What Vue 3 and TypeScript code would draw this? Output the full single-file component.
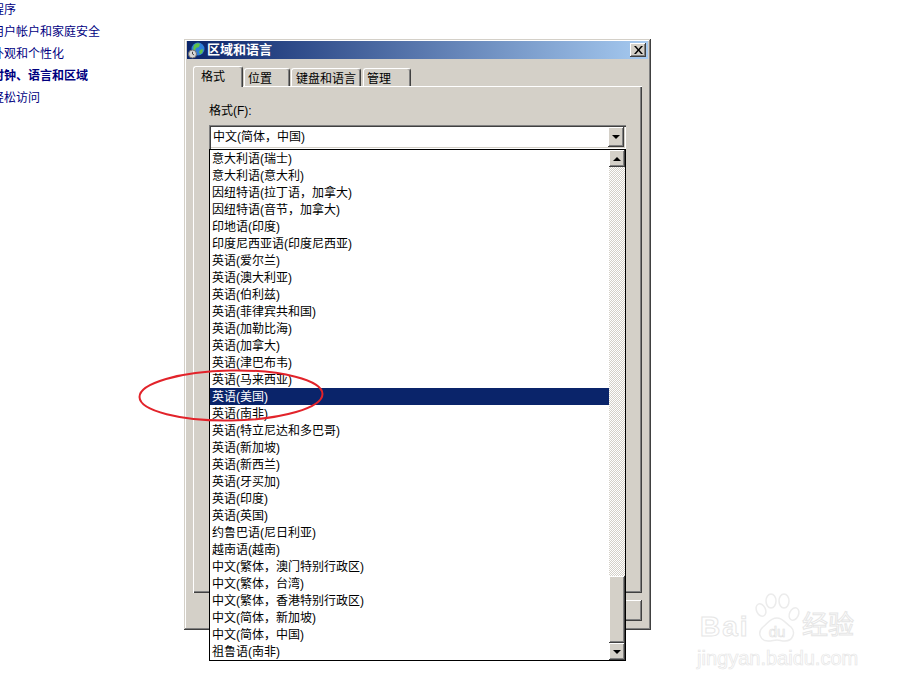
<template>
  <div class="page">
    <ul class="nav">
      <li v-for="item in navItems" :key="item.label" :class="{ current: item.current }">{{ item.label }}</li>
    </ul>

    <section class="window">
      <header class="titlebar">
        <svg class="title-icon" width="17" height="17" viewBox="0 0 17 17">
          <circle cx="10" cy="7" r="6.5" fill="#2f7fd8" />
          <path d="M6 3c2-2 5-2 6-1l-1 3-3 1-1 3-2-2zM12 8l3-1c0 3-1 5-3 5l-1-2z" fill="#5fbf4a" />
          <circle cx="4.5" cy="12" r="4" fill="#d8d8d8" stroke="#6f6f6f" />
          <path d="M4.5 9.8V12l1.6 1" fill="none" stroke="#444" />
        </svg>
        <span class="title-text">区域和语言</span>
        <button class="close">
          <svg width="9" height="8" viewBox="0 0 9 8">
            <path d="M0 0h2l2.500 3L7 0h2L5.500 4 9 8H7L4.500 5 2 8H0l3.500-4z" fill="#000" />
          </svg>
        </button>
      </header>

      <nav class="tabs">
        <div v-for="tab in tabs" :key="tab.label" class="tab" :class="tab.cls">{{ tab.label }}</div>
      </nav>

      <div class="panel">
        <label class="field-label">格式(F):</label>
        <div class="combo">
          <span class="combo-value">中文(简体，中国)</span>
          <span class="arrow-btn combo-btn"><i class="tri down"></i></span>
        </div>
      </div>

      <footer class="footer">
        <button class="action"></button>
      </footer>

      <div class="dropdown">
        <div class="rows">
          <div v-for="(row, i) in rows" :key="row" class="row" :class="{ selected: i === selectedIndex }">{{ row }}</div>
        </div>
        <div class="scrollbar">
          <span class="arrow-btn scroll-btn"><i class="tri up"></i></span>
          <div class="track"></div>
          <div class="thumb"></div>
          <span class="arrow-btn scroll-btn"><i class="tri down"></i></span>
        </div>
      </div>
    </section>

    <svg class="annotation" width="906" height="689" viewBox="0 0 906 689">
      <ellipse cx="231" cy="395.500" rx="91.500" ry="25" fill="none" stroke="#e2232a" stroke-width="2" transform="rotate(-1 231 395.500)" />
    </svg>

    <div class="watermark">
      <div class="wm-top">
        <span class="wm-bai">Bai</span>
        <svg class="wm-paw" width="46" height="50" viewBox="0 0 46 50">
          <g fill="#fff" stroke="#ececec" stroke-width="1.500">
            <ellipse cx="7" cy="17" rx="4.500" ry="6.500" transform="rotate(-25 7 17)" />
            <ellipse cx="17" cy="8" rx="5" ry="7" />
            <ellipse cx="30" cy="8" rx="5" ry="7" />
            <ellipse cx="40" cy="21" rx="4.500" ry="6.500" transform="rotate(25 40 21)" />
            <path d="M23 25c6 0 8 5 14 9 5 5 2 14-6 14-4 0-5-1-8-1s-5 1-9 1c-8 0-11-9-5-14 5-4 7-9 14-9z" />
          </g>
          <text x="23" y="44" text-anchor="middle" class="wm-du">du</text>
        </svg>
        <span class="wm-cn">经验</span>
      </div>
      <div class="wm-url">jingyan.baidu.com</div>
    </div>
  </div>
</template>

<script setup lang="ts">
const navItems = [
  { label: '程序' },
  { label: '用户帐户和家庭安全' },
  { label: '外观和个性化' },
  { label: '时钟、语言和区域', current: true },
  { label: '轻松访问' },
];

const tabs = [
  { label: '格式', cls: 'active' },
  { label: '位置', cls: 'pos' },
  { label: '键盘和语言', cls: 'kbd' },
  { label: '管理', cls: 'admin' },
];

const rows = [
  '意大利语(瑞士)',
  '意大利语(意大利)',
  '因纽特语(拉丁语，加拿大)',
  '因纽特语(音节，加拿大)',
  '印地语(印度)',
  '印度尼西亚语(印度尼西亚)',
  '英语(爱尔兰)',
  '英语(澳大利亚)',
  '英语(伯利兹)',
  '英语(菲律宾共和国)',
  '英语(加勒比海)',
  '英语(加拿大)',
  '英语(津巴布韦)',
  '英语(马来西亚)',
  '英语(美国)',
  '英语(南非)',
  '英语(特立尼达和多巴哥)',
  '英语(新加坡)',
  '英语(新西兰)',
  '英语(牙买加)',
  '英语(印度)',
  '英语(英国)',
  '约鲁巴语(尼日利亚)',
  '越南语(越南)',
  '中文(繁体，澳门特别行政区)',
  '中文(繁体，台湾)',
  '中文(繁体，香港特别行政区)',
  '中文(简体，新加坡)',
  '中文(简体，中国)',
  '祖鲁语(南非)',
];

const selectedIndex = 14;
</script>

<style>
html,
body {
  margin: 0;
  background: #fff;
}
</style>

<style scoped>
.page {
  position: relative;
  width: 906px;
  height: 689px;
  overflow: hidden;
  background: #fff;
  font-family: 'Liberation Sans', 'Noto Sans CJK SC', sans-serif;
  font-size: 12px;
  color: #000;
}

.nav {
  list-style: none;
  margin: 0 0 0 -8px;
  padding: 0;
  color: #00007f;
  line-height: 22px;
  position: absolute;
  top: -1px;
  left: 0;
}

.nav .current {
  font-weight: 700;
}

.window {
  position: absolute;
  left: 184px;
  top: 39px;
  width: 467px;
  height: 591px;
  box-sizing: border-box;
  padding: 2px 3px 3px;
  background: #d4d0c8;
  box-shadow: inset -1px -1px #404040, inset 1px 1px #d4d0c8, inset -2px -2px #808080, inset 2px 2px #fff;
  display: flex;
  flex-direction: column;
}

.titlebar {
  height: 18px;
  flex: none;
  display: flex;
  align-items: center;
  padding: 0 2px 0 1px;
  background: linear-gradient(90deg, #0a246a, #a6caf0);
}

.title-icon {
  flex: none;
}

.title-text {
  margin-left: 2px;
  color: #fff;
  font-weight: 700;
  font-size: 13px;
  line-height: 18px;
}

.close {
  margin-left: auto;
  width: 16px;
  height: 14px;
  padding: 0;
  border: 0;
  background: #d4d0c8;
  box-shadow: inset -1px -1px #404040, inset 1px 1px #fff, inset -2px -2px #808080;
  display: flex;
  align-items: center;
  justify-content: center;
}

.tabs {
  display: flex;
  align-items: flex-end;
  height: 27px;
  flex: none;
  margin-left: 6px;
  position: relative;
  z-index: 1;
}

.tab {
  box-sizing: border-box;
  height: 18px;
  padding: 3px 0 0 3px;
  line-height: 15px;
  background: #d4d0c8;
  border-top: 1px solid #fff;
  border-left: 1px solid #fff;
  border-right: 1px solid #404040;
  border-radius: 3px 3px 0 0;
  box-shadow: inset -1px 0 #808080;
  margin-right: 1px;
  margin-bottom: 0;
}

.tab.active {
  width: 50px;
  height: 21px;
  padding: 3px 0 0 7px;
  margin-bottom: -1px;
  font-size: 12px;
}

.tab.pos {
  width: 46px;
}

.tab.kbd {
  width: 70px;
  margin-right: 2px;
  padding-left: 4px;
}

.tab.admin {
  width: 48px;
}

.panel {
  flex: none;
  height: 507px;
  margin: 0 6px;
  box-sizing: border-box;
  padding: 16px 15px 0;
  border-top: 1px solid #fff;
  border-left: 1px solid #fff;
  box-shadow: inset -1px -1px #404040, inset -2px -2px #808080;
}

.field-label {
  display: block;
  line-height: 17px;
}

.combo {
  margin-top: 5px;
  width: 417px;
  height: 24px;
  box-sizing: border-box;
  padding: 2px;
  display: flex;
  align-items: stretch;
  background: #fff;
  box-shadow: inset 1px 1px #808080, inset 2px 2px #404040, inset -1px -1px #fff, inset -2px -2px #d4d0c8;
}

.combo-value {
  flex: 1;
  padding-left: 2px;
  line-height: 20px;
}

.combo-btn {
  width: 16px;
}

.arrow-btn {
  flex: none;
  display: flex;
  align-items: center;
  justify-content: center;
  background: #d4d0c8;
  box-shadow: inset -1px -1px #404040, inset 1px 1px #fff, inset -2px -2px #808080;
}

.tri {
  width: 0;
  height: 0;
  border-left: 4px solid transparent;
  border-right: 4px solid transparent;
}

.tri.down {
  border-top: 4px solid #000;
}

.tri.up {
  border-bottom: 4px solid #000;
}

.footer {
  flex: none;
  display: flex;
  justify-content: flex-end;
  padding: 7px 6px 0 0;
}

.action {
  width: 75px;
  height: 21px;
  padding: 0;
  border: 0;
  background: #d4d0c8;
  box-shadow: inset -1px -1px #404040, inset 1px 1px #fff, inset -2px -2px #808080;
}

.dropdown {
  position: absolute;
  left: 25px;
  top: 110px;
  width: 417px;
  height: 512px;
  box-sizing: border-box;
  border: 1px solid #000;
  background: #fff;
  display: flex;
}

.rows {
  flex: 1;
  min-width: 0;
}

.row {
  height: 17px;
  padding-left: 2px;
  line-height: 19px;
  white-space: nowrap;
  overflow: hidden;
}

.row.selected {
  background: #0a246a;
  color: #fff;
}

.scrollbar {
  width: 16px;
  flex: none;
  display: flex;
  flex-direction: column;
}

.scroll-btn {
  height: 17px;
}

.track {
  flex: 1;
  background: repeating-conic-gradient(#d4d0c8 0 25%, #fff 0 50%) 0 0 / 2px 2px;
}

.thumb {
  height: 67px;
  flex: none;
  background: #d4d0c8;
  box-shadow: inset -1px -1px #404040, inset 1px 1px #fff, inset -2px -2px #808080;
}

.annotation {
  position: absolute;
  inset: 0;
  pointer-events: none;
}

.watermark {
  position: absolute;
  left: 697px;
  top: 590px;
  width: 162px;
  pointer-events: none;
}

.wm-top {
  display: flex;
  align-items: flex-end;
  height: 52px;
}

.wm-bai {
  width: 57px;
  margin-bottom: -3px;
  padding-left: 3px;
  box-sizing: border-box;
  font-size: 28px;
  font-weight: 700;
  line-height: 36px;
  color: #fff;
  letter-spacing: 2px;
  -webkit-text-stroke: 1px #e6e6e6;
}

.wm-paw {
  flex: none;
  margin-bottom: -1px;
}

.wm-du {
  font-size: 15px;
  fill: #fff;
  stroke: #e2e2e2;
  stroke-width: 0.700;
}

.wm-cn {
  margin-left: 2px;
  font-size: 26px;
  line-height: 34px;
  white-space: nowrap;
  color: #fff;
  -webkit-text-stroke: 1px #e6e6e6;
}

.wm-url {
  margin-top: 5px;
  font-size: 20px;
  line-height: 22px;
  white-space: nowrap;
  color: #fff;
  -webkit-text-stroke: 0.7px #e6e6e6;
}
</style>
